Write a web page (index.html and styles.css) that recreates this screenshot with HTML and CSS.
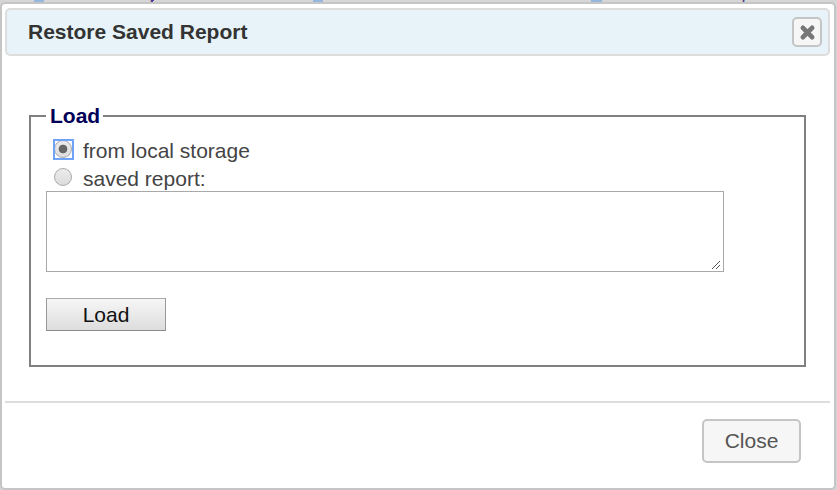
FILE: index.html
```html
<!DOCTYPE html>
<html lang="en">
<head>
<meta charset="utf-8">
<title>Restore Saved Report</title>
<link rel="stylesheet" href="styles.css">
</head>
<body>
<div class="backdrop" aria-hidden="true">
  <svg width="837" height="2" viewBox="0 0 837 2" shape-rendering="crispEdges">
    <path fill="#94b6df" d="M34 0h10v2H34zM313 0h10v2h-10zM591 0h11v2h-11z"/>
    <path fill="#4b419b" d="M151 0h3v1h-1v1h-2zM743 0h1v2h-1z"/>
    <path fill="#d5a38d" d="M150 0h1v2h-1zM742 0h1v2h-1z"/>
    <path fill="#70a5d8" d="M744 0h1v2h-1z"/>
  </svg>
</div>
<div class="dialog" role="dialog">
  <header class="titlebar">
    <span class="title">Restore Saved Report</span>
    <button class="dismiss" aria-label="Close dialog">
      <svg width="16" height="16" viewBox="0 0 16 16"><path d="M3.4 3.4l9.2 9.2M12.6 3.4l-9.2 9.2" stroke="#777" stroke-width="4.8" stroke-linecap="round"/></svg>
    </button>
  </header>
  <main class="content">
    <fieldset class="group">
      <legend>Load</legend>
      <label class="option"><span class="radio-box focused"><input type="radio" name="source" checked></span>from local storage</label>
      <label class="option"><span class="radio-box"><input type="radio" name="source"></span>saved report:</label>
      <div class="report-field">
        <textarea class="report"></textarea>
        <svg class="grip" width="9" height="9" viewBox="0 0 9 9" shape-rendering="crispEdges"><path fill="#555" d="M0 7h1v1H0zM1 6h1v1H1zM2 5h1v1H2zM3 4h1v1H3zM4 3h1v1H4zM5 2h1v1H5zM6 1h1v1H6zM7 0h1v1H7zM4 7h1v1H4zM5 6h1v1H5zM6 5h1v1H6zM7 4h1v1H7z"/></svg>
      </div>
      <button class="load">Load</button>
    </fieldset>
  </main>
  <footer class="actions"><button class="close">Close</button></footer>
</div>
</body>
</html>
```
FILE: styles.css
```css
* { box-sizing: border-box; }
body {
  margin: 0;
  width: 837px;
  height: 490px;
  overflow: hidden;
  background: #d6d6d6;
  color: #444;
  font: 21px/28px "Liberation Sans", Arial, sans-serif;
}
button { font: inherit; padding: 0; }
.backdrop { height: 2px; }
.backdrop svg { display: block; }
.dialog {
  width: 836px;
  height: 488px;
  padding: 4px 4px 0 3px;
  border: 2px solid #c5c5c5;
  border-radius: 5px;
  background: #fff;
}
.titlebar {
  display: flex;
  align-items: center;
  justify-content: space-between;
  width: 825px;
  height: 48px;
  padding: 0 6px 0 21px;
  border: 2px solid #ddd;
  border-radius: 5px;
  background: #e7f3f8;
}
.title { color: #333; font-weight: bold; }
.dismiss {
  display: grid;
  place-items: center;
  width: 30px;
  height: 30px;
  border: 2px solid #c5c5c5;
  border-radius: 5px;
  background: #f6f6f6;
}
.dismiss svg { display: block; transform: translate(0.5px, 0.5px); }
.content { height: 345px; padding: 46px 24px 0; }
.group {
  width: 777px;
  height: 265px;
  margin: 0;
  padding: 5px 15px 0;
  border: 2px solid #808080;
}
legend { height: 28px; padding: 0 3px 0 4px; color: #000059; font-weight: bold; }
.option { display: flex; align-items: flex-start; height: 28px; line-height: 32px; }
.radio-box {
  width: 21px;
  height: 21px;
  margin: 4px 9px 0 7px;
  padding: 1px;
}
.focused { outline: 2px solid #6ea3f7; outline-offset: -2px; }
.radio-box input {
  display: block;
  appearance: none;
  width: 18px;
  height: 18px;
  margin: 0;
  border: 1px solid #aaa;
  border-radius: 50%;
  background: linear-gradient(#ececec, #dcdcdc);
}
.radio-box input:checked { background: radial-gradient(circle, #666 0 4px, transparent 4.7px), linear-gradient(#ececec, #dcdcdc); }
.report-field { position: relative; width: 678px; height: 81px; }
.report {
  display: block;
  width: 100%;
  height: 100%;
  margin: 0;
  border: 1px solid #a9a9a9;
  resize: none;
}
.grip { position: absolute; right: 3px; bottom: 2px; }
.load {
  display: block;
  width: 120px;
  height: 33px;
  margin-top: 26px;
  border: 1px solid;
  border-color: #aaa #999 #8c8c8c #999;
  background: linear-gradient(#f6f6f6, #ddd);
  color: #111;
}
.actions {
  display: flex;
  justify-content: flex-end;
  width: 825px;
  height: 84px;
  padding: 16px 29px 0 0;
  border-top: 2px solid #ddd;
}
.close {
  width: 99px;
  height: 44px;
  border: 2px solid #c5c5c5;
  border-radius: 5px;
  background: #f6f6f6;
  color: #555;
}
```
